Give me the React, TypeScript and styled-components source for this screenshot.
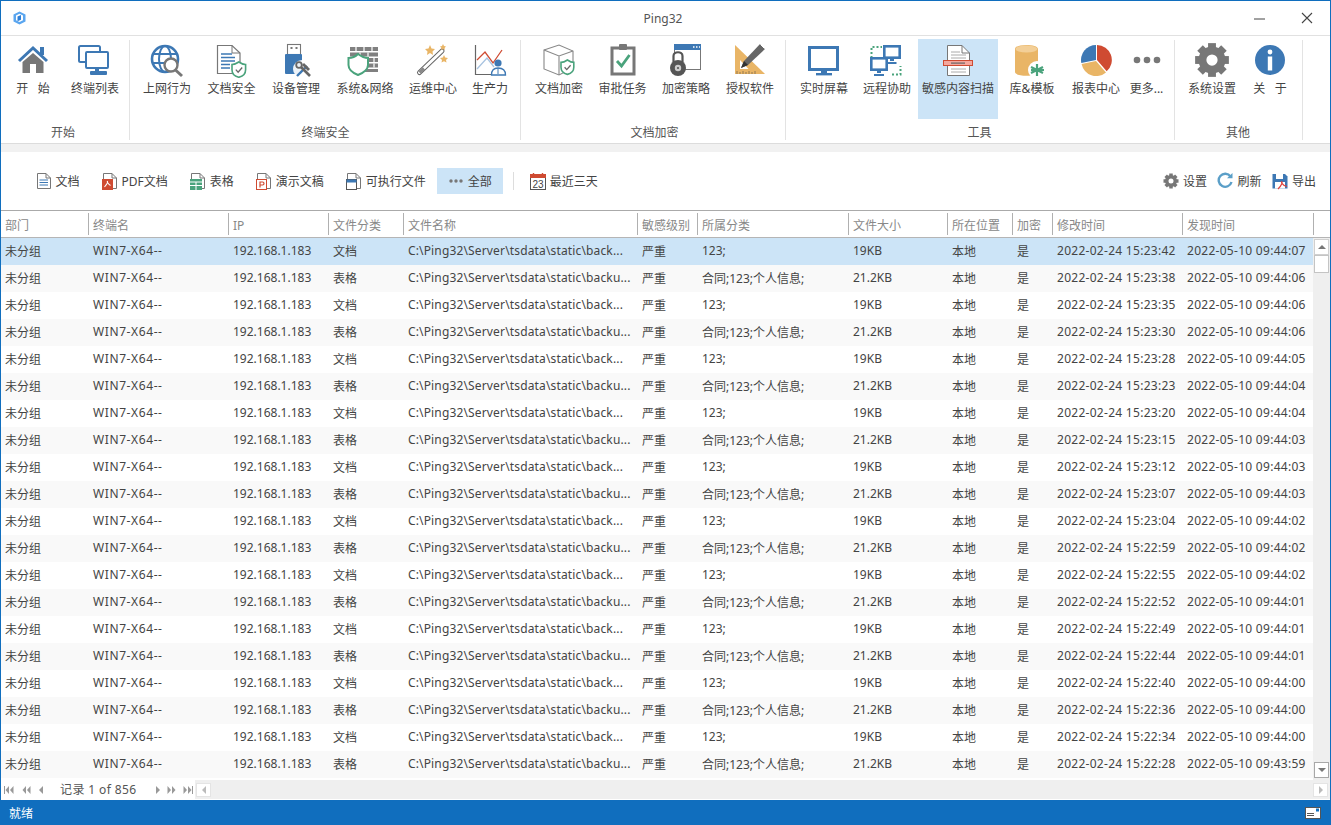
import React from "react";
import styled, { createGlobalStyle } from "styled-components";

const Global = createGlobalStyle`
  html, body { margin: 0; padding: 0; height: 100%; overflow: hidden; background: #fff; }
  #root { height: 100%; }
  * { box-sizing: border-box; }
`;

const BLUE = "#3d78b4";
const GRAY = "#777777";
const GREEN = "#4aa37c";
const ORANGE = "#e9b566";
const RED = "#cf4b32";
const COLS = "88px 140px 100px 75px 234px 60px 151px 99px 65px 40px 130px";

const Window = styled.div`
  width: 1331px; height: 825px; display: flex; flex-direction: column;
  border: 1px solid #106ebe; border-bottom: none;
  font-family: "Noto Sans", "Noto Sans CJK SC", sans-serif; font-size: 12px; color: #444;
  background: #fff; overflow: hidden;
`;
const TitleBar = styled.div`
  height: 35px; flex: none; display: grid; grid-template-columns: 1fr auto 1fr; align-items: center;
  border-bottom: 1px solid #e1e1e1; padding: 0 17px 0 12px;
`;
const Logo = styled.div` display: flex; align-items: center; `;
const Title = styled.div` font-size: 12px; color: #555; `;
const WinButtons = styled.div` display: flex; justify-content: flex-end; gap: 36px; align-items: center; `;
const Ribbon = styled.div`
  height: 108px; flex: none; display: flex; border-bottom: 1px solid #dcdcdc; background: #fff;
`;
const Group = styled.div<{ $w: number; $pad: number }>`
  width: ${p => p.$w}px; padding-left: ${p => p.$pad}px; position: relative; padding-top: 3px;
  &::after { content: ""; position: absolute; right: 0; top: 4px; bottom: 3px; width: 1px; background: #e3e3e3; }
`;
const GroupInner = styled.div` width: fit-content; display: flex; flex-direction: column; `;
const GroupButtons = styled.div` display: flex; height: 80px; `;
const GroupLabel = styled.div`
  height: 24px; display: flex; align-items: center; justify-content: center; color: #555; padding-top: 1px;
`;
const RibbonBtn = styled.div<{ $w: number; $on?: boolean }>`
  width: ${p => p.$w}px; height: 80px; flex: none; display: flex; flex-direction: column; align-items: center;
  padding-top: 3px; background: ${p => (p.$on ? "#cce4f7" : "transparent")};
  svg { display: block; }
`;
const RibbonText = styled.div` margin-top: 2px; line-height: 17px; white-space: nowrap; color: #444; `;
const Band = styled.div` height: 8px; flex: none; background: #f1f1f1; `;
const Toolbar = styled.div`
  height: 58px; flex: none; display: flex; align-items: center; justify-content: space-between;
  padding: 0 10px 0 23.5px; background: #fff;
`;
const ToolSide = styled.div` display: flex; align-items: center; `;
const ToolItem = styled.div<{ $on?: boolean }>`
  height: 26px; display: flex; align-items: center; gap: 4px; padding: 0 11px; white-space: nowrap; color: #444;
  background: ${p => (p.$on ? "#cce4f7" : "transparent")};
`;
const ToolRight = styled(ToolItem)` padding: 0 4px; margin-left: 2.5px; `;
const ToolSep = styled.div` width: 1px; height: 18px; background: #ddd; margin: 0 5px 0 10px; `;
const HeaderRow = styled.div`
  height: 28px; flex: none; display: grid; grid-template-columns: ${COLS} 131px 17px;
  border-top: 1px solid #aaa; border-bottom: 1px solid #b5b5b5; color: #888; align-items: center;
`;
const HeaderCell = styled.div`
  height: 22px; line-height: 22px; padding: 2px 0 0 4px; border-right: 1px solid #b0b0b0; white-space: nowrap;
`;
const HeaderEnd = styled.div``;
const Body = styled.div` flex: none; height: 542px; display: flex; `;
const Rows = styled.div` width: 1312px; flex: none; `;
const Row = styled.div<{ $sel: boolean; $alt: boolean }>`
  height: 27px; padding-bottom: 2px; display: grid; grid-template-columns: ${COLS} 130px;
  align-items: center; color: #444;
  background: ${p => (p.$sel ? "#cce4f7" : p.$alt ? "#f9f9f9" : "#fff")};
`;
const Cell = styled.div<{ $track?: number }>`
  padding-left: 4px; white-space: nowrap; overflow: hidden; letter-spacing: ${p => p.$track ?? 0}px;
`;
const VScroll = styled.div`
  width: 17px; flex: none; background: #efefef; display: flex; flex-direction: column; padding: 1px 1px 2px 1px;
`;
const ScrollBtn = styled.div<{ $strong?: boolean }>`
  width: 15px; height: 16px; background: #fff; border: 1px solid ${p => (p.$strong ? "#a8a8a8" : "#d0d0d0")};
  display: flex; align-items: center; justify-content: center; flex: none;
`;
const VThumb = styled.div` width: 15px; height: 18px; background: #fff; border: 1px solid #c4c4c4; flex: none; `;
const Spacer = styled.div` flex: 1; `;
const Pager = styled.div` height: 20px; flex: none; display: flex; align-items: stretch; background: #fff; `;
const Nav = styled.div` width: 194px; flex: none; display: flex; align-items: center; padding-left: 3px; `;
const NavIcons = styled.div<{ $gap: number; $after: number }>`
  display: flex; align-items: center; gap: ${p => p.$gap}px; margin-right: ${p => p.$after}px;
`;
const NavText = styled.span` color: #555; white-space: nowrap; margin-right: 18px; letter-spacing: 0.4px; padding-bottom: 2px; `;
const HScroll = styled.div`
  flex: 1; background: #efefef; display: flex; align-items: center; justify-content: space-between; padding: 0 2px 0 1px; margin-bottom: 1px;
`;
const HBtn = styled.div`
  width: 15px; height: 14px; background: #fff; border: 1px solid #e4e4e4; display: flex; align-items: center; justify-content: center;
`;
const Status = styled.div`
  flex: 1; background: #106ebe; color: #fff; display: flex; align-items: center; justify-content: space-between; padding: 0 9px 0 8px;
`;

const Shield = ({ x, y, s = 1, c = GREEN, w = 1.6 }: { x: number; y: number; s?: number; c?: string; w?: number }) => (
  <g transform={`translate(${x} ${y}) scale(${s})`}>
    <path d="M8 0C11 2 13 3 16 3V9C16 14 12 17 8 18C4 17 0 14 0 9V3C3 3 5 2 8 0Z" fill="#fff" stroke={c} strokeWidth={w / s} />
    <path d="M4.5 9L7.2 12L12 6.5" fill="none" stroke="#666" strokeWidth={1.3 / s} />
  </g>
);

const Gear = ({ size, c = GRAY }: { size: number; c?: string }) => (
  <svg width={size} height={size} viewBox="0 0 32 32">
    {[0, 45, 90, 135, 180, 225, 270, 315].map(a => (
      <rect key={a} x="12.5" y="1" width="7" height="8" fill={c} transform={`rotate(${a} 16 16)`} />
    ))}
    <circle cx="16" cy="16" r="8.5" fill="none" stroke={c} strokeWidth="7" />
  </svg>
);

const S36 = ({ children }: { children: React.ReactNode }) => (
  <svg width="36" height="36" viewBox="0 0 36 36">{children}</svg>
);

const ribbonIcons: Record<string, React.ReactNode> = {
  home: <S36>
    <path d="M7.5 20L18 11L28.5 20V31H21V22H15V31H7.5Z" fill={GRAY} />
    <path d="M4 19L18 6L32 19" fill="none" stroke={BLUE} strokeWidth="3" />
    <rect x="25" y="5" width="4" height="8" fill={BLUE} />
  </S36>,
  monitors: <S36>
    <rect x="2" y="4" width="21" height="16" rx="1.5" fill="none" stroke={BLUE} strokeWidth="2" />
    <rect x="9" y="10" width="22" height="16" rx="1" fill="#fff" stroke={BLUE} strokeWidth="2" />
    <rect x="18" y="26" width="4" height="3" fill={BLUE} />
    <rect x="13" y="29" width="17" height="4" rx="1" fill={BLUE} />
  </S36>,
  globe: <S36>
    <circle cx="16" cy="17" r="13" fill="none" stroke={BLUE} strokeWidth="2.6" />
    <ellipse cx="16" cy="17" rx="6" ry="13" fill="none" stroke={BLUE} strokeWidth="2" />
    <path d="M4 12H28M3 21H28" stroke={BLUE} strokeWidth="2" />
    <circle cx="22" cy="23" r="6.5" fill="#fff" stroke={GRAY} strokeWidth="2.4" />
    <path d="M26.5 28L33 34" stroke={GRAY} strokeWidth="3" />
  </S36>,
  docShield: <S36>
    <path d="M3.5 3.5H18L26 11V31.5H3.5Z" fill="#fff" stroke={GRAY} strokeWidth="1.2" />
    <path d="M18 3.5V11H26" fill="none" stroke={GRAY} strokeWidth="1" />
    <path d="M7 12H18M7 15.5H21M7 19H21M7 22.5H16M7 26H16" stroke={BLUE} strokeWidth="1.3" />
    <Shield x={18} y={20} s={0.85} />
  </S36>,
  usb: <S36>
    <rect x="9.5" y="2.5" width="13" height="10" fill="#fff" stroke={GRAY} strokeWidth="1.1" />
    <rect x="12.5" y="5" width="2" height="2" fill={GRAY} />
    <rect x="17.5" y="5" width="2" height="2" fill={GRAY} />
    <rect x="7" y="12" width="17" height="20" rx="1" fill={BLUE} />
    <circle cx="24" cy="27" r="9" fill="#fff" opacity="0.9" />
    <path d="M19 34L29 24" stroke={BLUE} strokeWidth="2.4" />
    <path d="M26 21L32 27L30 29L24 23Z" fill="#666" />
    <path d="M32 34L23 25" stroke="#666" strokeWidth="2.6" />
    <circle cx="21" cy="23" r="2.8" fill="none" stroke="#666" strokeWidth="1.8" />
  </S36>,
  wall: <S36>
    <path d="M3 5H31V9H3ZM3 10.5H31V14.5H3ZM3 16H31V20H3ZM3 21.5H31V25.5H3ZM10 27H31V30H10Z" fill="#808080" />
    <path d="M9 5V9M17 5V9M25 5V9M13 10.5V14.5M21 10.5V14.5M27 16V20M27 21.5V25.5" stroke="#fff" strokeWidth="1.2" />
    <path d="M11 12C15 15 18 16 21 16V23C21 28 16 31 11 33C6 31 1.5 28 1.5 23V16C5 16 8 15 11 12Z" fill="#fff" stroke={GREEN} strokeWidth="2" />
  </S36>,
  wand: <S36>
    <path d="M4.5 30.5L27 9" stroke="#666" strokeWidth="5" strokeLinecap="round" />
    <path d="M4.5 30.5L27 9" stroke="#fff" strokeWidth="3" strokeLinecap="round" />
    <path d="M4.5 30.5L9 26.5" stroke="#888" strokeWidth="3.4" />
    <path d="M15 3L16.5 6.5L20 7L17.5 9.5L18 13L15 11L12 13L12.5 9.5L10 7L13.5 6.5Z" fill={ORANGE} />
    <path d="M28 2L29 4L31 4.5L29.5 6L30 8L28 7L26 8L26.5 6L25 4.5L27 4Z" fill={ORANGE} />
    <path d="M29 13L30.2 15.5L33 16L31 18L31.5 20.5L29 19.2L26.5 20.5L27 18L25 16L27.8 15.5Z" fill={ORANGE} />
  </S36>,
  chart: <S36>
    <path d="M3.5 3V32.5H22" fill="none" stroke="#666" strokeWidth="1.2" />
    <path d="M5 18L13 10L21 21L30 8" fill="none" stroke={RED} strokeWidth="1.3" />
    <path d="M5 27L15 16L22 25" fill="none" stroke="#a8c3e0" strokeWidth="1.3" />
    <circle cx="26" cy="21" r="3.6" fill={BLUE} />
    <path d="M19.5 33C19.5 28 22 26 26 26C30 26 33.5 28 33.5 33Z" fill="#fff" stroke={BLUE} strokeWidth="1.3" />
    <path d="M26 26L26 32" stroke={BLUE} strokeWidth="1" />
  </S36>,
  cube: <S36>
    <path d="M3 8L18 3L32 9V26L18 33L3 27Z" fill="#fff" stroke="#888" strokeWidth="1.1" />
    <path d="M3 8L18 14L32 9M18 14V33" fill="none" stroke="#888" strokeWidth="1.1" />
    <Shield x={20} y={18} s={0.8} />
  </S36>,
  clip: <S36>
    <rect x="7" y="6" width="22" height="26" fill="#fff" stroke={GRAY} strokeWidth="3" />
    <rect x="14" y="2" width="8" height="6" rx="1" fill={GRAY} />
    <path d="M12 19L16.5 24L24.5 13" fill="none" stroke={GREEN} strokeWidth="2.8" />
  </S36>,
  lockWin: <S36>
    <rect x="6.5" y="2.5" width="26" height="25" fill="#fff" stroke="#777" strokeWidth="1" />
    <rect x="6" y="2" width="27" height="6" fill={BLUE} />
    <path d="M25 5H26.5M28 5H29.5M31 5H32" stroke="#fff" strokeWidth="1.4" />
    <path d="M5.5 20V14C5.5 9 14.5 9 14.5 14V20" fill="#fff" stroke="#555" strokeWidth="2.2" />
    <circle cx="10" cy="26" r="8" fill="#555" />
    <circle cx="10" cy="26" r="3.2" fill="#ccc" />
    <circle cx="10" cy="26" r="1.1" fill="#555" />
  </S36>,
  ruler: <S36>
    <path d="M3 3L33 32H3Z" fill={ORANGE} />
    <path d="M8 18L8 27L16.5 27Z" fill="#fff" />
    <path d="M5 32V29M8 32V30M11 32V29M14 32V30M17 32V29M20 32V30M23 32V29" stroke="#7b6a4d" strokeWidth="0.8" />
    <path d="M9 26L12 19L28 2L33 7L16 23Z" fill="#666" />
    <path d="M9 26L12 19L16 23Z" fill="#333" />
    <path d="M28.5 2.5L32.5 6.5" stroke="#fff" strokeWidth="1" />
  </S36>,
  screen: <S36>
    <rect x="3.5" y="5.5" width="28" height="22" fill="#fff" stroke={BLUE} strokeWidth="3" />
    <rect x="15" y="29" width="6" height="3" fill={BLUE} />
    <rect x="10" y="31" width="16" height="2.4" fill={BLUE} />
  </S36>,
  remote: <S36>
    <path d="M2.5 16V5H13M23 32.5H31.5V24" fill="none" stroke={GREEN} strokeWidth="2" strokeDasharray="2 2" />
    <rect x="15.3" y="4.3" width="15.4" height="11.4" fill="#fff" stroke={BLUE} strokeWidth="2.6" />
    <path d="M21 17H25V19H21ZM18.5 20H27.5V22H18.5Z" fill={BLUE} />
    <rect x="2.3" y="16.3" width="15.4" height="11.4" fill="#fff" stroke={BLUE} strokeWidth="2.6" />
    <path d="M8 29H12V31H8ZM5 32H15V34H5Z" fill={BLUE} />
  </S36>,
  scan: <S36>
    <path d="M7.5 3.5H22L29.5 11V33.5H7.5Z" fill="#fff" stroke="#777" strokeWidth="1" />
    <path d="M22 3.5V11H29.5" fill="none" stroke="#777" strokeWidth="1" />
    <path d="M11 10H20M11 13H26M11 16H26M11 27H26M11 30H26" stroke="#aaa" strokeWidth="1" />
    <rect x="3.5" y="18.5" width="29" height="5" fill="#f4a79d" stroke={RED} strokeWidth="1" />
    <rect x="11" y="20.5" width="14" height="1.2" fill="#666" />
  </S36>,
  db: <S36>
    <path d="M1 7C1 1.5 24 1.5 24 7V30C24 35 1 35 1 30Z" fill={ORANGE} />
    <ellipse cx="12.5" cy="7" rx="11" ry="3.5" fill="#f3cf97" />
    <circle cx="23" cy="28" r="9" fill="#fff" />
    <path d="M23 22V34M17 25L29 31M29 25L17 31M17 28H30" stroke={GREEN} strokeWidth="2.2" />
  </S36>,
  pie: <S36>
    <path d="M18 18V3A15 15 0 0 0 3.3 21Z" fill={BLUE} />
    <path d="M19 18V3A15 15 0 0 1 28.7 29.3Z" fill={RED} />
    <path d="M18 19L28 30.5A15 15 0 0 1 3.6 22Z" fill={ORANGE} />
  </S36>,
  more: <S36>
    <circle cx="8" cy="18" r="3.3" fill={GRAY} />
    <circle cx="18" cy="18" r="3.3" fill={GRAY} />
    <circle cx="28" cy="18" r="3.3" fill={GRAY} />
  </S36>,
  gear: <Gear size={36} />,
  info: <S36>
    <circle cx="18" cy="18" r="15" fill={BLUE} />
    <circle cx="18" cy="10" r="2.4" fill="#fff" />
    <rect x="15.8" y="14.5" width="4.4" height="14" fill="#fff" />
  </S36>,
};

const groups = [
  { w: 129, pad: 0, label: "开始", items: [
    { i: "home", t: "开\u00a0\u00a0\u00a0始", w: 64 }, { i: "monitors", t: "终端列表", w: 60 } ] },
  { w: 391, pad: 5, label: "终端安全", items: [
    { i: "globe", t: "上网行为", w: 64 }, { i: "docShield", t: "文档安全", w: 65 }, { i: "usb", t: "设备管理", w: 64 },
    { i: "wall", t: "系统&网络", w: 74 }, { i: "wand", t: "运维中心", w: 62 }, { i: "chart", t: "生产力", w: 52 } ] },
  { w: 265, pad: 6, label: "文档加密", items: [
    { i: "cube", t: "文档加密", w: 64 }, { i: "clip", t: "审批任务", w: 63 }, { i: "lockWin", t: "加密策略", w: 64 }, { i: "ruler", t: "授权软件", w: 64 } ] },
  { w: 389, pad: 6, label: "工具", items: [
    { i: "screen", t: "实时屏幕", w: 64 }, { i: "remote", t: "远程协助", w: 62 }, { i: "scan", t: "敏感内容扫描", w: 80, on: true },
    { i: "db", t: "库&模板", w: 68 }, { i: "pie", t: "报表中心", w: 60 }, { i: "more", t: "更多...", w: 41 } ] },
  { w: 128, pad: 5, label: "其他", items: [
    { i: "gear", t: "系统设置", w: 64 }, { i: "info", t: "关\u00a0\u00a0\u00a0于", w: 52 } ] },
];

const S18 = ({ children }: { children: React.ReactNode }) => (
  <svg width="16" height="18" viewBox="0 0 16 18">{children}</svg>
);
const Page = ({ children }: { children?: React.ReactNode }) => (
  <S18>
    <path d="M1.5 1.5H10L14.5 6V16.5H1.5Z" fill="#fff" stroke="#777" strokeWidth="1" />
    <path d="M10 1.5V6H14.5" fill="none" stroke="#777" strokeWidth="1" />
    {children}
  </S18>
);

const toolIcons: Record<string, React.ReactNode> = {
  doc: <Page><path d="M3.5 8H12M3.5 10.5H12M3.5 13H12" stroke={BLUE} strokeWidth="1" /></Page>,
  pdf: <Page>
    <rect x="0" y="7" width="11" height="11" fill={RED} />
    <path d="M2.5 15C5 12 6 10.5 5.5 9.5C5 9 5 11 8.5 13.5" fill="none" stroke="#fff" strokeWidth="1.1" />
  </Page>,
  xls: <Page>
    <rect x="0" y="7" width="12" height="11" fill={GREEN} />
    <path d="M6 10V18M0 13.5H12M0 10H12" stroke="#fff" strokeWidth="1" />
  </Page>,
  ppt: <Page>
    <rect x="0.5" y="7.5" width="10" height="10" fill="#fff" stroke={RED} strokeWidth="1" />
    <path d="M4 15.5V10H6.5A1.5 1.5 0 0 1 6.5 13H4" fill="none" stroke={RED} strokeWidth="1.2" />
  </Page>,
  exe: <Page>
    <rect x="0.5" y="7.5" width="10" height="10" fill="#fff" stroke="#555" strokeWidth="1" />
    <rect x="0.5" y="7.5" width="10" height="3" fill={BLUE} />
  </Page>,
  dots: <S18>
    <circle cx="3" cy="9" r="1.7" fill={GRAY} /><circle cx="8" cy="9" r="1.7" fill={GRAY} /><circle cx="13" cy="9" r="1.7" fill={GRAY} />
  </S18>,
  cal: <S18>
    <rect x="0.5" y="2.5" width="15" height="15" fill="#fff" stroke="#555" strokeWidth="1" />
    <rect x="0" y="2" width="16" height="4" fill={RED} />
    <path d="M3.5 1V3.5M12.5 1V3.5" stroke={RED} strokeWidth="1.4" />
    <text x="8" y="15.5" textAnchor="middle" fontSize="10" fill="#444" fontFamily="Liberation Sans">23</text>
  </S18>,
  gear: <Gear size={16} />,
  refresh: <S18>
    <path d="M13.5 4.5A6.5 6.5 0 1 0 14.5 10" fill="none" stroke="#5b9fc8" strokeWidth="2.4" />
    <path d="M10 6.2H15.5V1Z" fill="#5b9fc8" />
  </S18>,
  export: <S18>
    <path d="M0.5 2H13L15.5 4.5V16.5H0.5Z" fill={BLUE} />
    <rect x="4" y="2" width="7" height="5" fill="#fff" />
    <rect x="3" y="10" width="10" height="6.5" fill="#fff" />
    <path d="M6 17C10 13 10.5 10 9.8 9.5C9 9.5 10 13.5 15 14.5" fill="none" stroke="#e0403a" strokeWidth="1.2" />
  </S18>,
};

const leftTools = [
  { i: "doc", t: "文档" }, { i: "pdf", t: "PDF文档" }, { i: "xls", t: "表格" }, { i: "ppt", t: "演示文稿" },
  { i: "exe", t: "可执行文件" }, { i: "dots", t: "全部", on: true },
];
const rightTools = [{ i: "gear", t: "设置" }, { i: "refresh", t: "刷新" }, { i: "export", t: "导出" }];

const headers = ["部门", "终端名", "IP", "文件分类", "文件名称", "敏感级别", "所属分类", "文件大小", "所在位置", "加密", "修改时间", "发现时间"];
const modified = ["15:23:42", "15:23:38", "15:23:35", "15:23:30", "15:23:28", "15:23:23", "15:23:20", "15:23:15", "15:23:12", "15:23:07", "15:23:04", "15:22:59", "15:22:55", "15:22:52", "15:22:49", "15:22:44", "15:22:40", "15:22:36", "15:22:34", "15:22:28"];
const found = ["09:44:07", "09:44:06", "09:44:06", "09:44:06", "09:44:05", "09:44:04", "09:44:04", "09:44:03", "09:44:03", "09:44:03", "09:44:02", "09:44:02", "09:44:02", "09:44:01", "09:44:01", "09:44:01", "09:44:00", "09:44:00", "09:44:00", "09:43:59"];

const Tri = ({ dir, c = "#999" }: { dir: "l" | "r" | "u" | "d"; c?: string }) => {
  const pts = { l: "5,0 5,8 1,4", r: "1,0 1,8 5,4", u: "0,6 8,6 4,2", d: "0,2 8,2 4,6" }[dir];
  return <svg width={dir === "l" || dir === "r" ? 6 : 8} height={8} viewBox={dir === "l" || dir === "r" ? "0 0 6 8" : "0 0 8 8"}><polygon points={pts} fill={c} /></svg>;
};
const Double = ({ dir, bar }: { dir: "l" | "r"; bar?: boolean }) => (
  <svg width="10" height="8" viewBox="0 0 10 8">
    {dir === "l"
      ? <>{bar && <rect x="0" y="0" width="1" height="8" fill="#999" />}<polygon points="5,0 5,8 1.5,4" fill="#999" /><polygon points="9.5,0 9.5,8 6,4" fill="#999" /></>
      : <><polygon points="0.5,0 0.5,8 4,4" fill="#999" /><polygon points="5,0 5,8 8.5,4" fill="#999" />{bar && <rect x="9" y="0" width="1" height="8" fill="#999" />}</>}
  </svg>
);

export default function App() {
  return (
    <Window>
      <Global />
      <TitleBar>
        <Logo>
          <svg width="13" height="14" viewBox="0 0 13 14">
            <path d="M6.5 0.5L12.5 3.5V10.5L6.5 13.5L0.5 10.5V3.5Z" fill="#5aa6f0" />
            <path d="M6.5 2.8L10 4.6V9.2L6.5 11L3 9.2V4.6Z" fill="#fff" />
            <path d="M4.5 5.5L8 3.9V8.8L4.5 10.2Z" fill="#2f7fd6" />
          </svg>
        </Logo>
        <Title>Ping32</Title>
        <WinButtons>
          <svg width="11" height="11" viewBox="0 0 11 11"><path d="M0 6H11" stroke="#444" strokeWidth="1" /></svg>
          <svg width="12" height="12" viewBox="0 0 12 12"><path d="M1 1L11 11M11 1L1 11" stroke="#444" strokeWidth="1.1" /></svg>
        </WinButtons>
      </TitleBar>
      <Ribbon>
        {groups.map(g => (
          <Group key={g.label} $w={g.w} $pad={g.pad}>
            <GroupInner>
              <GroupButtons>
                {g.items.map(it => (
                  <RibbonBtn key={it.t} $w={it.w} $on={(it as { on?: boolean }).on}>
                    {ribbonIcons[it.i]}
                    <RibbonText>{it.t}</RibbonText>
                  </RibbonBtn>
                ))}
              </GroupButtons>
              <GroupLabel>{g.label}</GroupLabel>
            </GroupInner>
          </Group>
        ))}
      </Ribbon>
      <Band />
      <Toolbar>
        <ToolSide>
          {leftTools.map(t => (
            <ToolItem key={t.t} $on={t.on}>{toolIcons[t.i]}{t.t}</ToolItem>
          ))}
          <ToolSep />
          <ToolItem>{toolIcons.cal}最近三天</ToolItem>
        </ToolSide>
        <ToolSide>
          {rightTools.map(t => (
            <ToolRight key={t.t}>{toolIcons[t.i]}{t.t}</ToolRight>
          ))}
        </ToolSide>
      </Toolbar>
      <HeaderRow>
        {headers.map(h => <HeaderCell key={h}>{h}</HeaderCell>)}
        <HeaderEnd />
      </HeaderRow>
      <Body>
        <Rows>
          {modified.map((m, i) => {
            const even = i % 2 === 0;
            return (
              <Row key={m} $sel={i === 0} $alt={!even}>
                <Cell>未分组</Cell>
                <Cell $track={0.6}>WIN7-X64--</Cell>
                <Cell>192.168.1.183</Cell>
                <Cell>{even ? "文档" : "表格"}</Cell>
                <Cell $track={0.15}>{even ? "C:\\Ping32\\Server\\tsdata\\static\\back..." : "C:\\Ping32\\Server\\tsdata\\static\\backu..."}</Cell>
                <Cell>严重</Cell>
                <Cell>{even ? "123;" : "合同;123;个人信息;"}</Cell>
                <Cell>{even ? "19KB" : "21.2KB"}</Cell>
                <Cell>本地</Cell>
                <Cell>是</Cell>
                <Cell $track={0.28}>2022-02-24 {m}</Cell>
                <Cell $track={0.28}>2022-05-10 {found[i]}</Cell>
              </Row>
            );
          })}
        </Rows>
        <VScroll>
          <ScrollBtn><Tri dir="u" c="#777" /></ScrollBtn>
          <VThumb />
          <Spacer />
          <ScrollBtn $strong><Tri dir="d" c="#777" /></ScrollBtn>
        </VScroll>
      </Body>
      <Pager>
        <Nav>
          <NavIcons $gap={7} $after={16}>
            <Double dir="l" bar /><Double dir="l" /><Tri dir="l" />
          </NavIcons>
          <NavText>记录 1 of 856</NavText>
          <NavIcons $gap={6} $after={0}>
            <Tri dir="r" /><Double dir="r" /><Double dir="r" bar />
          </NavIcons>
        </Nav>
        <HScroll>
          <HBtn><Tri dir="l" c="#bbb" /></HBtn>
          <HBtn><Tri dir="r" c="#bbb" /></HBtn>
        </HScroll>
      </Pager>
      <Status>
        <span>就绪</span>
        <svg width="16" height="12" viewBox="0 0 16 12">
          <rect x="0.5" y="0.5" width="15" height="11" fill="#fff" stroke="#555" strokeWidth="1" />
          <rect x="11" y="1.5" width="3" height="3" fill="#106ebe" />
          <path d="M2 6.5H9M2 8.5H9" stroke="#555" strokeWidth="1" />
        </svg>
      </Status>
    </Window>
  );
}
